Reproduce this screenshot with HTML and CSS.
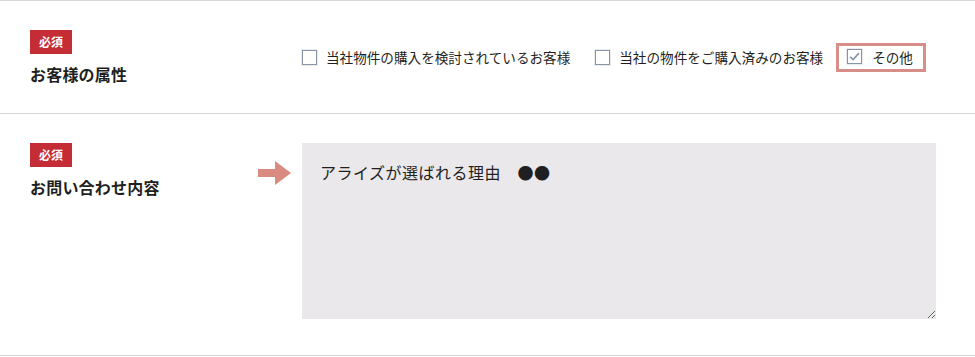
FILE: index.html
```html
<!DOCTYPE html>
<html lang="ja">
<head>
<meta charset="utf-8">
<title>お問い合わせ</title>
<link rel="stylesheet" href="styles.css">
</head>
<body>
<div class="form">
  <div class="row row-attr">
    <div class="head">
      <div class="head-text">
        <span class="badge">必須</span>
        <div class="label">お客様の属性</div>
      </div>
    </div>
    <div class="field choices">
      <label class="choice">
        <span class="box"></span>
        <span class="choice-text">当社物件の購入を検討されているお客様</span>
      </label>
      <label class="choice">
        <span class="box"></span>
        <span class="choice-text">当社の物件をご購入済みのお客様</span>
      </label>
      <label class="choice choice-highlight">
        <span class="box box-checked">
          <svg viewBox="0 0 14 14" width="13" height="13"><path d="M2.3 7.4 L5.5 10.4 L11.8 3.4" fill="none" stroke="#8797ab" stroke-width="1.8"/></svg>
        </span>
        <span class="choice-text">その他</span>
      </label>
    </div>
  </div>
  <div class="row row-msg">
    <div class="head">
      <div class="head-text">
        <span class="badge">必須</span>
        <div class="label">お問い合わせ内容</div>
      </div>
      <svg class="arrow" viewBox="0 0 34 24" width="34" height="24"><path d="M0 8 H17 V0 L33 12 L17 24 V16 H0 Z" fill="#d98b82"/></svg>
    </div>
    <div class="field">
      <textarea class="message">アライズが選ばれる理由　●●</textarea>
    </div>
  </div>
</div>
</body>
</html>
```
FILE: styles.css
```css
html, body {
  margin: 0;
  padding: 0;
  background: #fff;
}
body {
  font-family: "Noto Sans CJK JP", "Noto Sans", sans-serif;
  color: #1f1f22;
}
.form {
  border-top: 1px solid #d6d6d6;
}
.row {
  display: flex;
  border-bottom: 1px solid #d6d6d6;
  padding: 29px 39px 29px 30px;
}
.row-msg {
  padding-bottom: 36px;
}
.head {
  width: 272px;
  flex: none;
  display: flex;
  align-items: flex-start;
}
.head-text {
  display: flex;
  flex-direction: column;
  align-items: flex-start;
  gap: 10px;
}
.badge {
  display: inline-block;
  background: #c52d36;
  color: #fff;
  font-weight: 700;
  font-size: 12px;
  line-height: 24px;
  height: 24px;
  padding: 0 9px;
}
.label {
  font-size: 16px;
  font-weight: 700;
  line-height: 20px;
  letter-spacing: 0.2px;
}
.arrow {
  margin-left: auto;
  margin-right: 10px;
  margin-top: 18px;
}
.field {
  flex: 1;
}
.choices {
  display: flex;
  align-items: center;
}
.choice {
  display: flex;
  align-items: center;
  gap: 9px;
  font-size: 13.6px;
  line-height: 20px;
  margin-right: 25px;
  cursor: pointer;
}
.choice:nth-child(2) {
  margin-right: 13px;
}
.choice-highlight {
  border: 3px solid #d88e88;
  padding: 1px 10px 2px 8px;
  margin-right: 0;
  gap: 10px;
}
.box {
  width: 13px;
  height: 13px;
  border: 1px solid #8794a6;
  background: #fff;
  box-shadow: 0 0 0 1px #ececef;
  display: flex;
  align-items: center;
  justify-content: center;
  flex: none;
}
.box svg {
  display: block;
}
.message {
  display: block;
  box-sizing: border-box;
  width: 634px;
  height: 176px;
  border: none;
  background: #eae8eb;
  font-family: "Noto Sans CJK JP", "Noto Sans", sans-serif;
  font-size: 16px;
  line-height: 24px;
  letter-spacing: 0.5px;
  color: #1f1f22;
  padding: 17px 18px;
  margin: 0;
  outline: none;
}
```
